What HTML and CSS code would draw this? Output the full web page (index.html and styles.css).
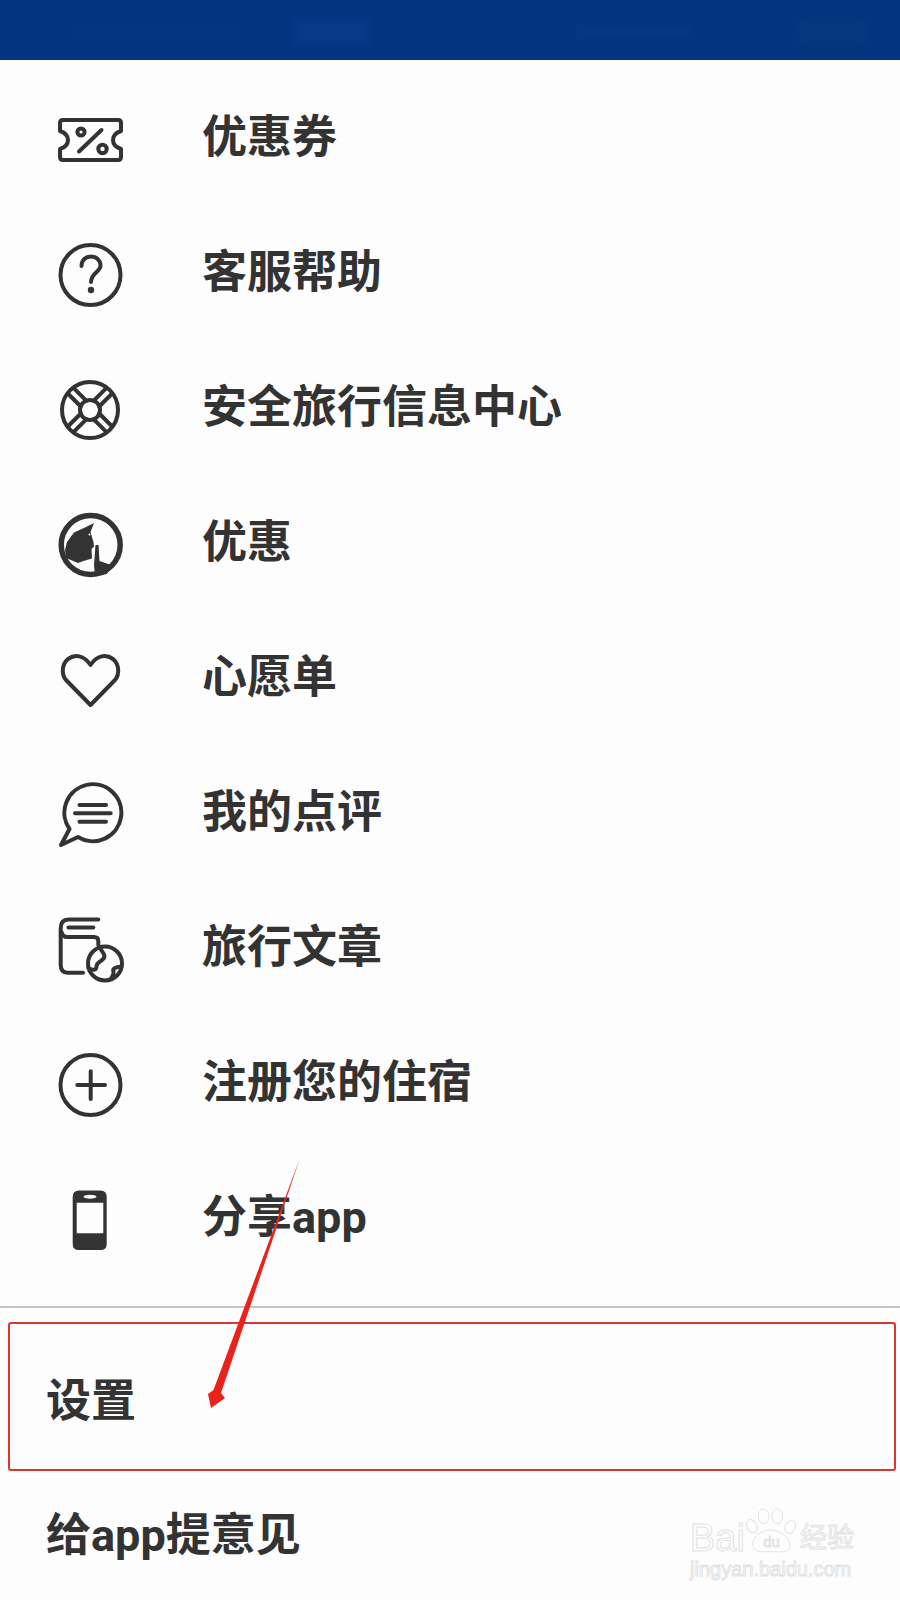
FILE: index.html
```html
<!DOCTYPE html>
<html lang="zh-CN">
<head>
    <meta charset="UTF-8">
    <meta name="viewport" content="width=device-width, initial-scale=1.0">
    <title>菜单</title>
    <link rel="stylesheet" href="styles.css">
</head>
<body>
    <div class="page">
        <div class="top-bar">
            <span class="blob blob-a"></span>
            <span class="blob blob-b"></span>
            <span class="blob blob-c"></span>
            <span class="blob blob-d"></span>
        </div>

        <ul class="menu">
            <li class="menu-item">
                <svg class="icon" viewBox="0 0 66 66">
                    <path d="M5 13H60Q63 13 63 16V24C57 26 55 30 55 33C55 36 57 40 63 42V50Q63 53 60 53H5Q2 53 2 50V42C8 40 10 36 10 33C10 30 8 26 2 24V16Q2 13 5 13Z"/>
                    <path d="M43.5 23L21 44.5"/>
                    <circle cx="23" cy="25" r="3.6"/>
                    <circle cx="44.5" cy="42" r="4.2"/>
                </svg>
                <span>优惠券</span>
            </li>
            <li class="menu-item">
                <svg class="icon" viewBox="0 0 66 66">
                    <circle cx="32.5" cy="33" r="30"/>
                    <path d="M23.5 24C23.5 18 28 14.5 33 14.5C38.5 14.5 42.5 18.5 42.5 23.5C42.5 30 33 31 33 40"/>
                    <circle class="solid" cx="33" cy="48" r="3.2"/>
                </svg>
                <span>客服帮助</span>
            </li>
            <li class="menu-item">
                <svg class="icon" viewBox="0 0 66 66">
                    <circle cx="32" cy="33" r="28"/>
                    <circle cx="32" cy="33" r="10"/>
                    <g transform="translate(32 33) rotate(45)">
                        <path d="M-4-9V-27M4-9V-27M-4 9V27M4 9V27M9-4H27M9 4H27M-9-4H-27M-9 4H-27"/>
                    </g>
                </svg>
                <span>安全旅行信息中心</span>
            </li>
            <li class="menu-item">
                <svg class="icon" viewBox="0 0 66 66">
                    <circle cx="32.7" cy="33" r="29.5" class="thick"/>
                    <path class="solid" d="M36 11L32.5 20L34 25L35.5 30L36 34.5L33.5 37L34 46.5L25.5 49L20 51L8 46L7 38L9 30L16 20.5L27 15.5Z"/>
                    <path class="solid" d="M37.5 33H40.5L41.5 49L53 53L49 62L37 64L36 53Z"/>
                    <circle class="cut" cx="31.5" cy="22.5" r="1"/>
                </svg>
                <span>优惠</span>
            </li>
            <li class="menu-item">
                <svg class="icon" viewBox="0 0 66 66">
                    <path d="M32.5 58L8 33C3 27 4 17 10 12C17 7 26 8 32.5 18C39 8 48 7 55 12C61 17 62 27 57 33Z"/>
                </svg>
                <span>心愿单</span>
            </li>
            <li class="menu-item">
                <svg class="icon" viewBox="0 0 66 66">
                    <path d="M11.5 47A28.5 28.5 0 1 1 20 55L3 63Z"/>
                    <path d="M21.5 23H48M17 31.3H52.7M21.5 39.7H48"/>
                </svg>
                <span>我的点评</span>
            </li>
            <li class="menu-item">
                <svg class="icon" viewBox="0 0 66 66">
                    <path d="M40.3 2.5H10.5Q2.7 2.5 2.7 11V48Q2.7 55.7 9.5 55.7H25"/>
                    <path d="M10.5 10.5H35.3"/>
                    <path d="M3.5 15Q4.5 20 9 20H36Q40.3 20 40.3 24V28"/>
                    <circle cx="47" cy="46.5" r="17"/>
                    <path d="M42 30.5C44 36 48 37 46 41C43 45 39 45 38.5 49C38.5 53 36 54 30.5 51M63.5 49.5C58 50 54 51 55.5 55C56 58 54 59 53 62"/>
                </svg>
                <span>旅行文章</span>
            </li>
            <li class="menu-item">
                <svg class="icon" viewBox="0 0 66 66">
                    <circle cx="32.5" cy="33" r="30"/>
                    <path d="M19.3 33H47M32.7 19.3V47"/>
                </svg>
                <span>注册您的住宿</span>
            </li>
            <li class="menu-item">
                <svg class="icon" viewBox="0 0 66 66">
                    <path class="solid" fill-rule="evenodd" d="M21 3.5H42.5Q48.7 3.5 48.7 10V57Q48.7 63 42.5 63H21Q14.7 63 14.7 57V10Q14.7 3.5 21 3.5ZM18.7 15.7V46.3H45.3V15.7Z"/>
                    <ellipse class="cut" cx="32" cy="9.7" rx="6.5" ry="2"/>
                </svg>
                <span>分享app</span>
            </li>
        </ul>

        <div class="divider"></div>

        <div class="plain-item"><span>设置</span></div>
        <div class="plain-item"><span>给app提意见</span></div>

        <!-- red marks drawn over the screenshot -->
        <div class="mark-box"></div>
        <svg class="mark-arrow" viewBox="0 0 900 1600">
            <polygon points="300,1158 221,1393 225,1398 211,1408 208,1394 213.5,1390"/>
        </svg>

        <div class="watermark">
            <div class="wm-top">
                <span class="wm-bai">Bai</span>
                <svg class="wm-paw" viewBox="0 0 56 48">
                    <ellipse cx="7" cy="18" rx="5" ry="7" transform="rotate(-25 7 18)"/>
                    <ellipse cx="19" cy="8" rx="5.5" ry="7.5"/>
                    <ellipse cx="33" cy="8" rx="5.5" ry="7.5"/>
                    <ellipse cx="46" cy="19" rx="5" ry="7" transform="rotate(25 46 19)"/>
                    <path d="M8 36C8 28 18 22 26 22C36 22 46 30 46 38C46 46 36 44 27 44C18 44 8 46 8 36Z"/>
                    <text x="27" y="39" text-anchor="middle">du</text>
                </svg>
                <span class="wm-cn">经验</span>
            </div>
            <div class="wm-url">jingyan.baidu.com</div>
        </div>
    </div>
</body>
</html>
```

FILE: styles.css
```css
* {
    box-sizing: border-box;
}

body {
    margin: 0;
    background-color: #fdfdfe;
    font-family: Roboto, "Noto Sans CJK SC", sans-serif;
    color: #333;
}

.page {
    position: relative;
    width: 900px;
    height: 1600px;
    overflow: hidden;
}

.top-bar {
    height: 60px;
    display: flex;
    align-items: center;
    background-color: #03347f;
    border-bottom: 1px solid #0b3a63;
    padding-top: 4px;
}

.blob {
    height: 26px;
    border-radius: 6px;
    filter: blur(4px);
}

.blob-a {
    width: 170px;
    height: 20px;
    margin-left: 70px;
    background-color: #05367f;
}

.blob-b {
    width: 75px;
    margin-left: 55px;
    background-color: #073a87;
}

.blob-c {
    width: 120px;
    height: 14px;
    margin-left: 205px;
    background-color: #063884;
}

.blob-d {
    width: 75px;
    margin-left: 100px;
    background-color: #06377f;
}

.menu {
    list-style: none;
    margin: 0;
    padding: 12px 0 0;
}

.menu-item {
    height: 135px;
    display: flex;
    align-items: center;
    gap: 78px;
    padding-left: 58px;
    font-size: 45px;
    font-weight: 700;
}

.menu-item span {
    position: relative;
    top: -6px;
}

.icon {
    width: 66px;
    height: 66px;
    flex-shrink: 0;
    fill: none;
    stroke: #333;
    stroke-width: 4;
    stroke-linecap: round;
    stroke-linejoin: round;
}

.icon .thick {
    stroke-width: 5.5;
}

.icon .solid {
    fill: #333;
    stroke: none;
}

.icon .cut {
    fill: #fdfdfe;
    stroke: none;
}

.divider {
    height: 2px;
    margin-top: 19px;
    margin-bottom: 24px;
    background-color: #c4c4c4;
}

.plain-item {
    height: 134px;
    display: flex;
    align-items: center;
    padding-left: 46px;
    font-size: 45px;
    font-weight: 700;
}

.plain-item span {
    position: relative;
    top: -2px;
}

.mark-box {
    position: absolute;
    left: 8px;
    top: 1322px;
    width: 888px;
    height: 149px;
    border: 2.5px solid #d9362e;
    border-radius: 3px;
}

.mark-arrow {
    position: absolute;
    left: 0;
    top: 0;
    width: 900px;
    height: 1600px;
    fill: #ea2219;
}

.watermark {
    position: absolute;
    left: 690px;
    top: 1503px;
    width: 164px;
    color: transparent;
    -webkit-text-stroke: 1px #e2e2e2;
}

.wm-top {
    display: flex;
    align-items: flex-end;
    height: 54px;
}

.wm-bai {
    width: 56px;
    font-family: "Liberation Sans", sans-serif;
    font-size: 38px;
    line-height: 38px;
}

.wm-paw {
    width: 56px;
    height: 50px;
    fill: none;
    stroke: #e2e2e2;
    stroke-width: 1;
}

.wm-paw text {
    font-family: "Liberation Sans", sans-serif;
    font-size: 15px;
}

.wm-cn {
    font-size: 27px;
    line-height: 38px;
    white-space: nowrap;
}

.wm-url {
    font-family: "Liberation Sans", sans-serif;
    font-size: 20px;
    line-height: 22px;
    margin-top: 1px;
    white-space: nowrap;
}
```
